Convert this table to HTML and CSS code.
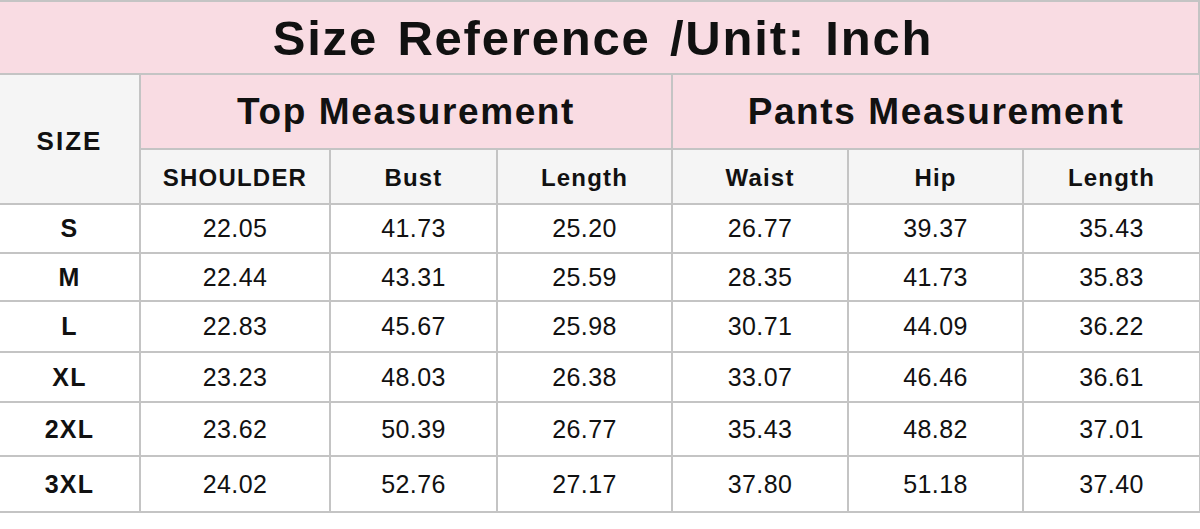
FILE: index.html
```html
<!DOCTYPE html>
<html>
<head>
<meta charset="utf-8">
<link rel="stylesheet" href="styles.css">
</head>
<body>
<div class="chart">
  <div class="title">Size Reference /Unit: Inch</div>
  <table class="sizes">
    <colgroup>
      <col class="c-size"><col class="c-sh"><col class="c-bust"><col class="c-len"><col class="c-waist"><col class="c-hip"><col class="c-plen">
    </colgroup>
    <thead>
      <tr class="h1">
        <th rowspan="2" class="size-head">SIZE</th>
        <th colspan="3" class="group">Top Measurement</th>
        <th colspan="3" class="group">Pants Measurement</th>
      </tr>
      <tr class="h2">
        <th class="sub">SHOULDER</th>
        <th class="sub">Bust</th>
        <th class="sub">Length</th>
        <th class="sub">Waist</th>
        <th class="sub">Hip</th>
        <th class="sub">Length</th>
      </tr>
    </thead>
    <tbody>
      <tr class="r1"><th>S</th><td>22.05</td><td>41.73</td><td>25.20</td><td>26.77</td><td>39.37</td><td>35.43</td></tr>
      <tr class="r2"><th>M</th><td>22.44</td><td>43.31</td><td>25.59</td><td>28.35</td><td>41.73</td><td>35.83</td></tr>
      <tr class="r3"><th>L</th><td>22.83</td><td>45.67</td><td>25.98</td><td>30.71</td><td>44.09</td><td>36.22</td></tr>
      <tr class="r4"><th>XL</th><td>23.23</td><td>48.03</td><td>26.38</td><td>33.07</td><td>46.46</td><td>36.61</td></tr>
      <tr class="r5"><th>2XL</th><td>23.62</td><td>50.39</td><td>26.77</td><td>35.43</td><td>48.82</td><td>37.01</td></tr>
      <tr class="r6"><th>3XL</th><td>24.02</td><td>52.76</td><td>27.17</td><td>37.80</td><td>51.18</td><td>37.40</td></tr>
    </tbody>
  </table>
</div>
</body>
</html>
```
FILE: styles.css
```css
html, body {
  margin: 0;
  padding: 0;
  background: #ffffff;
}
body {
  font-family: "Liberation Sans", Arial, sans-serif;
  color: #111111;
}
.chart {
  width: 1200px;
}
.title {
  box-sizing: border-box;
  height: 75px;
  background: #f9dce3;
  border-top: 2px solid #c4c4c4;
  border-bottom: 2px solid #c4c4c4;
  border-right: 2px solid #c4c4c4;
  display: flex;
  align-items: center;
  justify-content: center;
  font-size: 49px;
  font-weight: bold;
  letter-spacing: 1.8px;
  word-spacing: 4px;
  padding-left: 8px;
  padding-top: 0;
}
.sizes {
  width: 1200px;
  table-layout: fixed;
  border-collapse: collapse;
}
.c-size { width: 140px; }
.c-sh { width: 190px; }
.c-bust { width: 167px; }
.c-len { width: 175px; }
.c-waist { width: 176px; }
.c-hip { width: 175px; }
.c-plen { width: 177px; }
.sizes th, .sizes td {
  border: 2px solid #c4c4c4;
  text-align: center;
  padding: 0;
}
.sizes tr > :first-child {
  border-left: none;
}
.sizes thead tr:first-child th {
  border-top: none;
}
.size-head {
  background: #f5f5f5;
  font-size: 26px;
  font-weight: bold;
  letter-spacing: 2px;
  padding-top: 4px !important;
}
.group {
  background: #f9dce3;
  font-size: 37px;
  font-weight: bold;
  letter-spacing: 1.6px;
}
.sub {
  background: #f5f5f5;
  font-size: 24px;
  font-weight: bold;
  letter-spacing: 1.2px;
  padding-top: 2px !important;
}
.h1 { height: 74px; }
.h2 { height: 55px; }
.sizes tbody th {
  font-size: 25px;
  font-weight: bold;
  letter-spacing: 1.2px;
}
.sizes tbody td {
  font-size: 25px;
  font-weight: normal;
  letter-spacing: 0.4px;
}
.r1 { height: 49px; }
.r2 { height: 48px; }
.r3 { height: 51px; }
.r4 { height: 50px; }
.r5 { height: 54px; }
.r6 { height: 56px; }
```
